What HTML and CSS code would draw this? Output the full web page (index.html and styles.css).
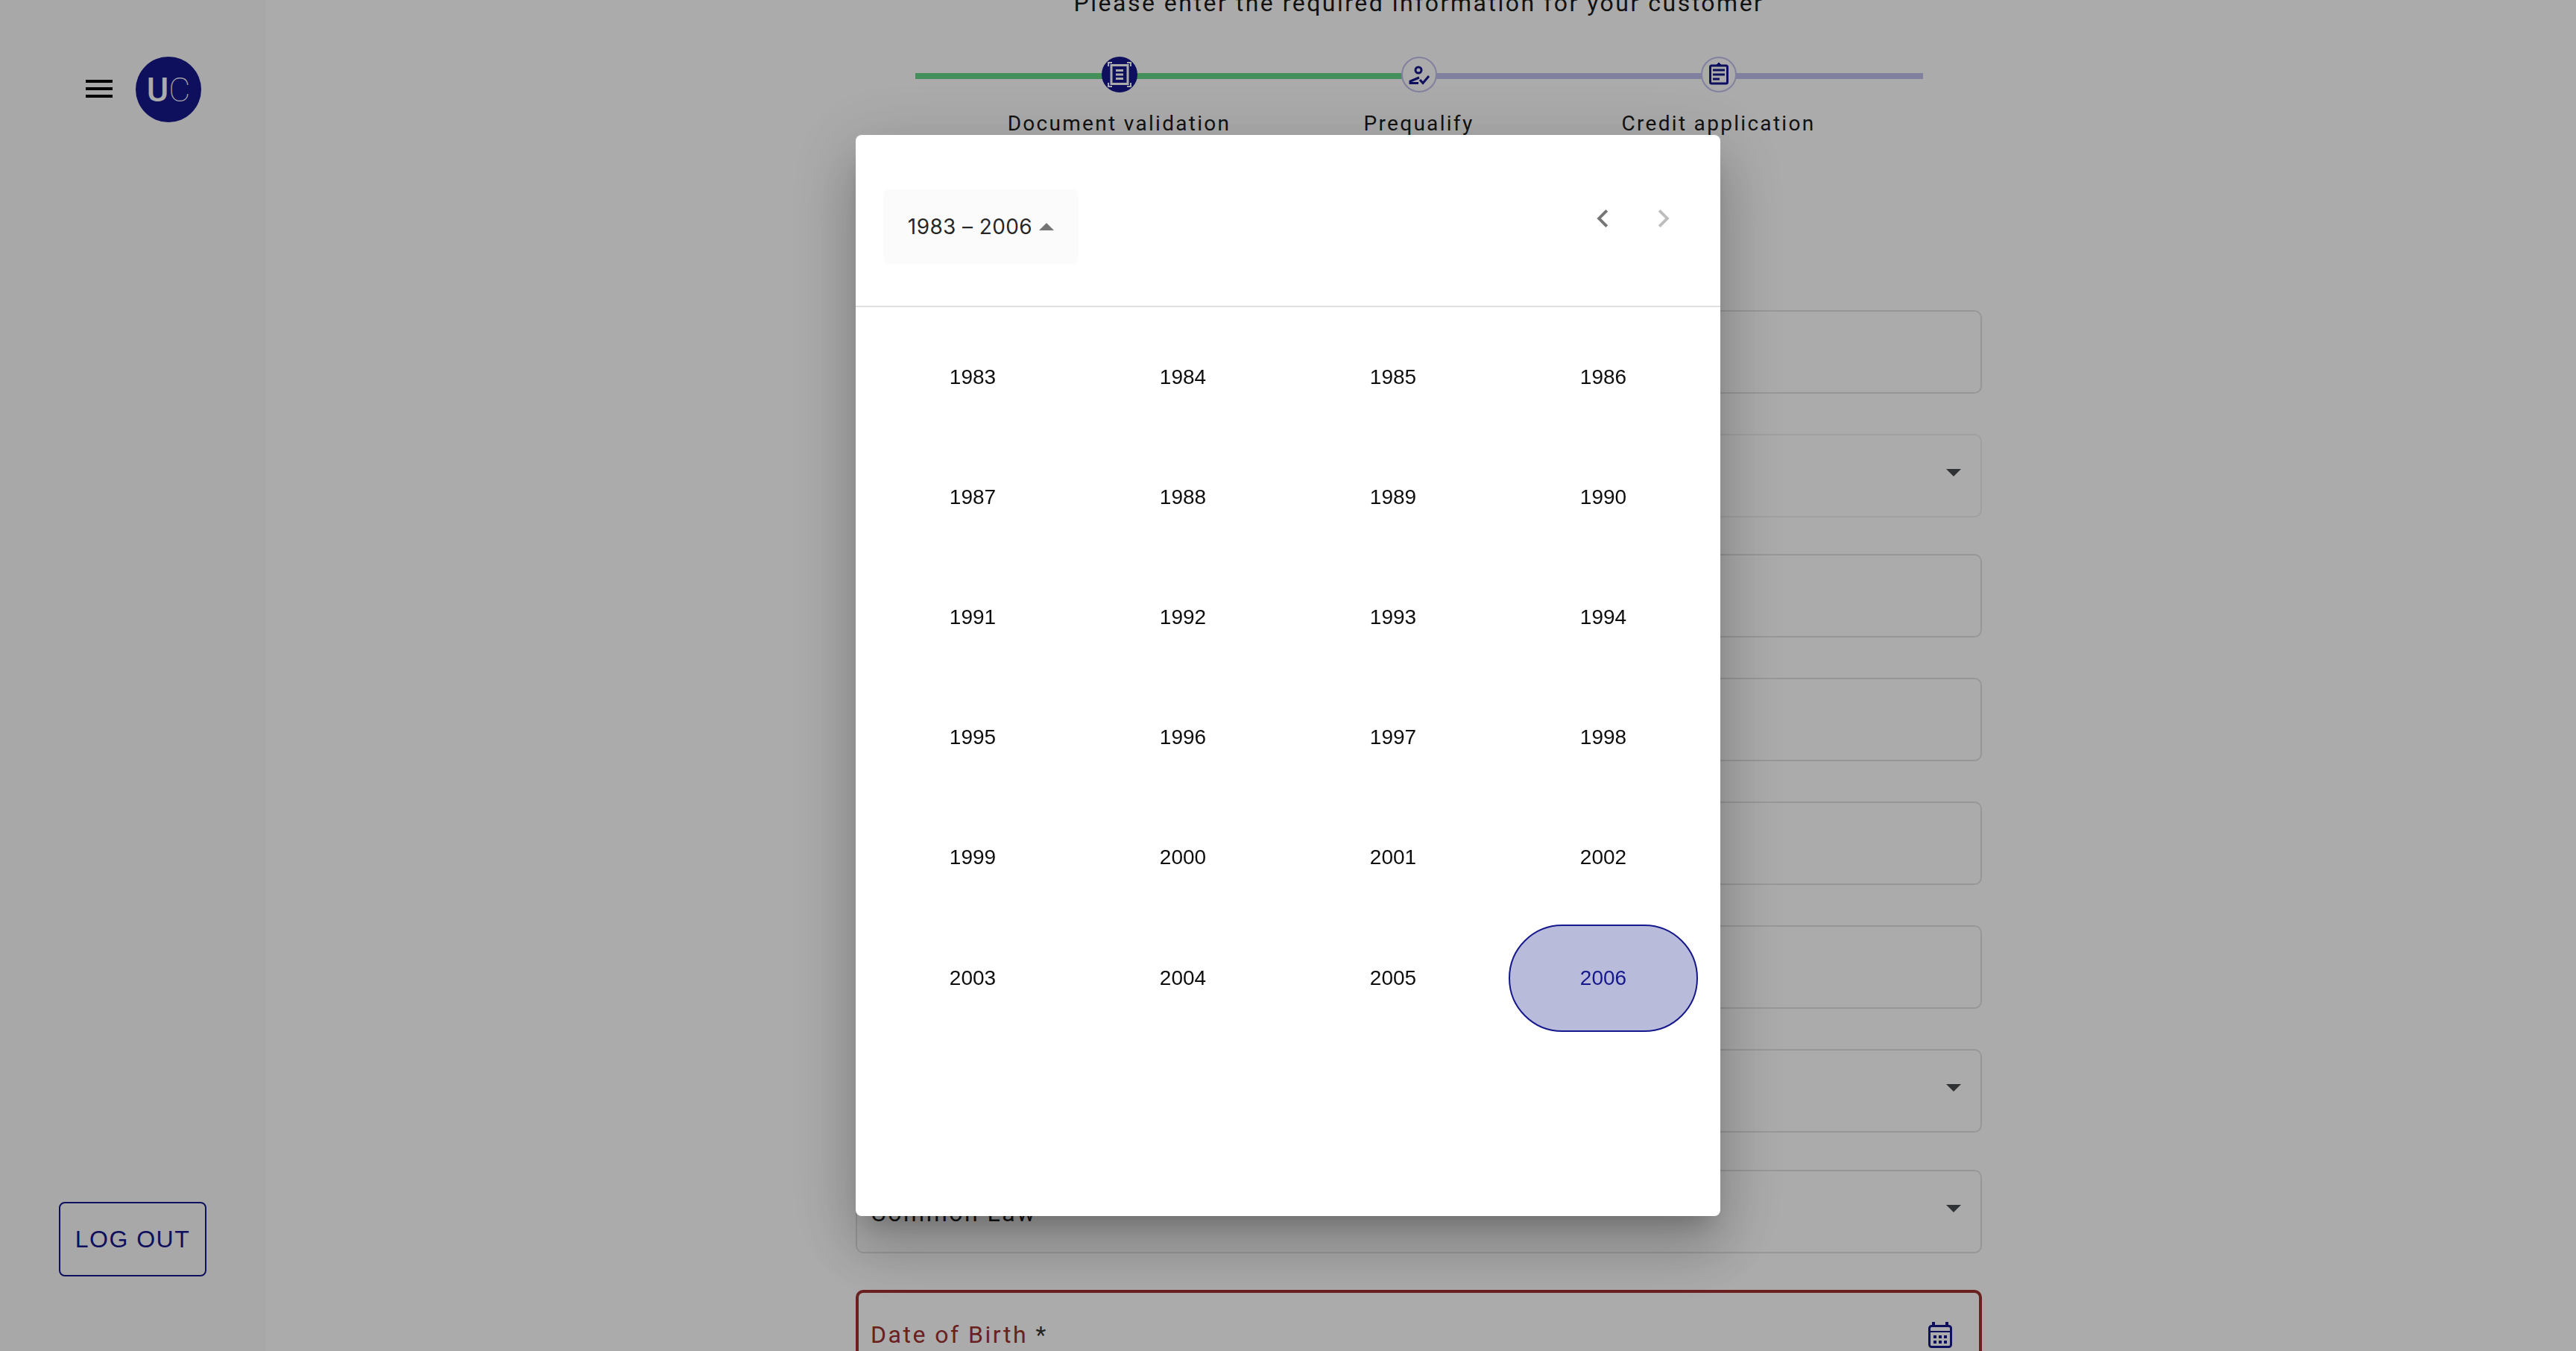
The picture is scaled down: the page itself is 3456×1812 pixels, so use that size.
FILE: index.html
```html
<!DOCTYPE html>
<html lang="en">
<head>
    <meta charset="UTF-8">
    <meta name="viewport" content="width=device-width, initial-scale=1.0">
    <title>Customer Application</title>
    <link rel="stylesheet" href="styles.css">
</head>
<body>
    <!-- Sidebar -->
    <aside class="sidebar">
        <div class="sidebar-top">
            <svg class="menu-icon" viewBox="0 0 24 24"><path d="M3 18h18v-2H3v2zm0-5h18v-2H3v2zm0-7v2h18V6H3z"/></svg>
            <div class="logo"><span class="logo-u">U</span><span class="logo-c">C</span></div>
        </div>
        <button class="logout">LOG OUT</button>
    </aside>

    <!-- Page content, scrolled down a little behind the dialog -->
    <main class="main">
        <p class="intro">Please enter the required information for your customer</p>

        <div class="stepper">
            <div class="stepper-line"></div>
            <div class="step">
                <div class="step-circle step-active">
                    <svg class="step-icon" viewBox="0 0 48 48" fill="none" stroke="#fff" stroke-width="2">
                        <path d="M9 13V8h5M34 8h5v5M39 35v5h-5M14 40H9v-5"/>
                        <rect x="13" y="11.500" width="22" height="25" stroke-width="3"/>
                        <path d="M19 18.500h10M19 24h10M19 29.500h10" stroke-width="3"/>
                    </svg>
                </div>
                <span class="step-label">Document validation</span>
            </div>
            <div class="step">
                <div class="step-circle">
                    <svg class="step-icon" viewBox="0 0 48 48" fill="none" stroke="#15188c" stroke-width="3">
                        <circle cx="23" cy="18" r="4"/>
                        <path d="M24 28l-12 5v2.500h11"/>
                        <path d="M25 31l4 4.500 8-9.500"/>
                    </svg>
                </div>
                <span class="step-label">Prequalify</span>
            </div>
            <div class="step">
                <div class="step-circle">
                    <svg class="step-icon" viewBox="0 0 48 48" fill="none" stroke="#15188c" stroke-width="3">
                        <rect x="12.500" y="12" width="23" height="24" rx="2"/>
                        <path d="M21 11l3-3 3 3z" fill="#15188c" stroke-width="1"/>
                        <path d="M16 18h16M16 24h16M16 30h9"/>
                    </svg>
                </div>
                <span class="step-label">Credit application</span>
            </div>
        </div>

        <form class="form">
            <div class="field"></div>
            <div class="field field-select field-light">
                <svg class="select-arrow" viewBox="0 0 20 10"><path d="M0 0l10 10L20 0z"/></svg>
            </div>
            <div class="field"></div>
            <div class="field"></div>
            <div class="field"></div>
            <div class="field"></div>
            <div class="field field-select">
                <svg class="select-arrow" viewBox="0 0 20 10"><path d="M0 0l10 10L20 0z"/></svg>
            </div>
            <div class="field field-select">
                <span class="field-value">Common Law</span>
                <svg class="select-arrow" viewBox="0 0 20 10"><path d="M0 0l10 10L20 0z"/></svg>
            </div>
            <div class="field field-error">
                <span class="field-label">Date of Birth <span class="required">*</span></span>
                <svg class="calendar-icon" viewBox="0 0 32 35" fill="none" stroke="#15188c">
                    <rect x="1.500" y="5.500" width="29" height="28" rx="3" stroke-width="3"/>
                    <path d="M7 0v5M25 0v5" stroke-width="4"/>
                    <path d="M2 13h28" stroke-width="2"/>
                    <path d="M7 20h4M14 20h4M21 20h4M7 27h4M14 27h4M21 27h4" stroke-width="4"/>
                </svg>
            </div>
        </form>
    </main>

    <!-- Year picker dialog -->
    <div class="backdrop">
        <div class="dialog">
            <div class="dialog-header">
                <button class="year-range">1983 – 2006 <span class="range-arrow"></span></button>
                <div class="year-nav">
                    <svg class="chevron" viewBox="0 0 16 24"><path d="M15.200 2.800L12.400 0 .4 12l12 12 2.800-2.800L5.900 12z"/></svg>
                    <svg class="chevron chevron-off" viewBox="0 0 16 24"><path d="M.8 2.800L3.600 0l12 12-12 12-2.800-2.800L10.100 12z"/></svg>
                </div>
            </div>
            <div class="year-grid">
                <div class="year"><span class="year-btn">1983</span></div>
                <div class="year"><span class="year-btn">1984</span></div>
                <div class="year"><span class="year-btn">1985</span></div>
                <div class="year"><span class="year-btn">1986</span></div>
                <div class="year"><span class="year-btn">1987</span></div>
                <div class="year"><span class="year-btn">1988</span></div>
                <div class="year"><span class="year-btn">1989</span></div>
                <div class="year"><span class="year-btn">1990</span></div>
                <div class="year"><span class="year-btn">1991</span></div>
                <div class="year"><span class="year-btn">1992</span></div>
                <div class="year"><span class="year-btn">1993</span></div>
                <div class="year"><span class="year-btn">1994</span></div>
                <div class="year"><span class="year-btn">1995</span></div>
                <div class="year"><span class="year-btn">1996</span></div>
                <div class="year"><span class="year-btn">1997</span></div>
                <div class="year"><span class="year-btn">1998</span></div>
                <div class="year"><span class="year-btn">1999</span></div>
                <div class="year"><span class="year-btn">2000</span></div>
                <div class="year"><span class="year-btn">2001</span></div>
                <div class="year"><span class="year-btn">2002</span></div>
                <div class="year"><span class="year-btn">2003</span></div>
                <div class="year"><span class="year-btn">2004</span></div>
                <div class="year"><span class="year-btn">2005</span></div>
                <div class="year"><span class="year-btn year-selected">2006</span></div>
            </div>
        </div>
    </div>
</body>
</html>
```

FILE: styles.css
```css
html, body {
    height: 100%;
}
body {
    display: flex;
    margin: 0;
    overflow: hidden;
    background-color: #fff;
    color: #000;
    font-family: Roboto, sans-serif;
}
button {
    background: none;
    border: none;
    padding: 0;
    cursor: pointer;
}

/* Sidebar */
.sidebar {
    display: flex;
    flex-direction: column;
    justify-content: space-between;
    align-items: flex-start;
    flex: 0 0 356px;
    box-sizing: border-box;
    padding: 76px 0 100px 79px;
    background-color: #fbfbfb;
}
.sidebar-top {
    display: flex;
    margin-left: 30px;
}
.menu-icon {
    width: 48px;
    height: 48px;
    margin: 19px 25px 0 0;
}
.logo {
    display: flex;
    justify-content: center;
    align-items: center;
    width: 88px;
    height: 88px;
    border-radius: 50%;
    background-color: #15188c;
    color: #fff;
    font-size: 45px;
    line-height: 1;
}
.logo-u {
    font-weight: 500;
}
.logo-c {
    font-weight: 100;
}
.logout {
    box-sizing: border-box;
    width: 198px;
    height: 100px;
    border: 2px solid #15188c;
    border-radius: 8px;
    color: #15188c;
    font-family: "Liberation Sans", Arial, sans-serif;
    font-size: 32px;
    letter-spacing: 1.500px;
}

/* Main column */
.main {
    flex: 1;
    box-sizing: border-box;
    padding-right: 5px;
    display: flex;
    flex-direction: column;
    align-items: center;
}
.intro {
    margin: -18px 0 0;
    font-size: 32px;
    line-height: 44px;
    letter-spacing: 2.500px;
    color: #1a1a1a;
}
.stepper {
    position: relative;
    display: flex;
    box-sizing: border-box;
    width: 1352px;
    height: 117px;
    margin-top: 50px;
    padding: 0 73px;
}
.stepper-line {
    position: absolute;
    top: 22px;
    left: 0;
    right: 0;
    height: 8px;
    background: linear-gradient(to right, #67d589 676px, #c1c1ee 676px);
}
.step {
    position: relative;
    display: flex;
    flex-direction: column;
    align-items: center;
    flex: 0 0 402px;
}
.step-circle {
    box-sizing: border-box;
    width: 48px;
    height: 48px;
    border: 2px solid #c1c1ee;
    border-radius: 50%;
    background-color: #fff;
}
.step-active {
    border-color: #15188c;
    background-color: #15188c;
}
.step-icon {
    display: block;
    width: 48px;
    height: 48px;
    margin: -2px;
}
.step-label {
    margin-top: 26px;
    font-size: 28px;
    line-height: 32px;
    letter-spacing: 2.300px;
    color: #1a1a1a;
    white-space: nowrap;
}

/* Form fields */
.form {
    width: 1511px;
    margin-top: 234px;
}
.field {
    display: flex;
    justify-content: space-between;
    box-sizing: border-box;
    height: 112px;
    margin-bottom: 54px;
    border: 2px solid #e2e2e2;
    border-radius: 10px;
}
.field-select {
    align-items: flex-start;
    justify-content: flex-end;
    margin-bottom: 49px;
}
.field-select + .field-select {
    margin-top: 50px;
}
.field-light {
    border-color: #efefef;
}
.field-value {
    flex: 1;
    padding: 36px 0 0 18px;
    font-size: 32px;
    line-height: 40px;
    letter-spacing: 2.500px;
    color: #1a1a1a;
}
.select-arrow {
    width: 20px;
    height: 10px;
    margin: 45px 26px 0 0;
    fill: #464b4e;
}
.field-error {
    border: 4px solid #a03030;
    padding: 0 36px 0 16px;
}
.field-label {
    padding-top: 34px;
    font-size: 32px;
    line-height: 44px;
    letter-spacing: 2.500px;
    color: #a03030;
}
.required {
    color: #333;
}
.calendar-icon {
    width: 32px;
    height: 35px;
    margin-top: 39px;
}

/* Dialog */
.backdrop {
    position: fixed;
    inset: 0;
    display: flex;
    justify-content: center;
    align-items: center;
    background-color: rgba(0, 0, 0, 0.33);
}
.dialog {
    width: 1160px;
    height: 1450px;
    border-radius: 8px;
    background-color: #fff;
    box-shadow: 0 22px 30px -14px rgba(0, 0, 0, 0.2), 0 48px 76px 6px rgba(0, 0, 0, 0.14), 0 18px 92px 16px rgba(0, 0, 0, 0.12);
}
.dialog-header {
    display: flex;
    justify-content: space-between;
    align-items: flex-start;
    box-sizing: border-box;
    height: 231px;
    padding: 73px 68px 0 37px;
    border-bottom: 2px solid #e0e0e0;
}
.year-range {
    display: flex;
    align-items: center;
    justify-content: center;
    gap: 9px;
    width: 262px;
    height: 100px;
    border-radius: 8px;
    background-color: #fbfbfb;
    color: rgba(0, 0, 0, 0.87);
    font-family: Inter, sans-serif;
    font-size: 28px;
    letter-spacing: 0.400px;
}
.range-arrow {
    width: 0;
    height: 0;
    border-left: 10px solid transparent;
    border-right: 10px solid transparent;
    border-bottom: 10px solid #757575;
}
.year-nav {
    display: flex;
    gap: 66px;
    margin-top: 27px;
}
.chevron {
    width: 16px;
    height: 24px;
    fill: #757575;
}
.chevron-off {
    fill: #bdbdbd;
}
.year-grid {
    display: grid;
    grid-template-columns: repeat(4, 282px);
    grid-auto-rows: 161.200px;
    padding: 13px 16px 0;
}
.year {
    display: flex;
    justify-content: center;
    align-items: center;
}
.year-btn {
    display: flex;
    justify-content: center;
    align-items: center;
    box-sizing: border-box;
    width: 254px;
    height: 144px;
    border-radius: 72px;
    color: rgba(0, 0, 0, 0.95);
    font-family: "Liberation Sans", Arial, sans-serif;
    font-size: 28px;
}
.year-selected {
    border: 2px solid #15188c;
    background-color: #b9bbdb;
    color: #15188c;
}
```
